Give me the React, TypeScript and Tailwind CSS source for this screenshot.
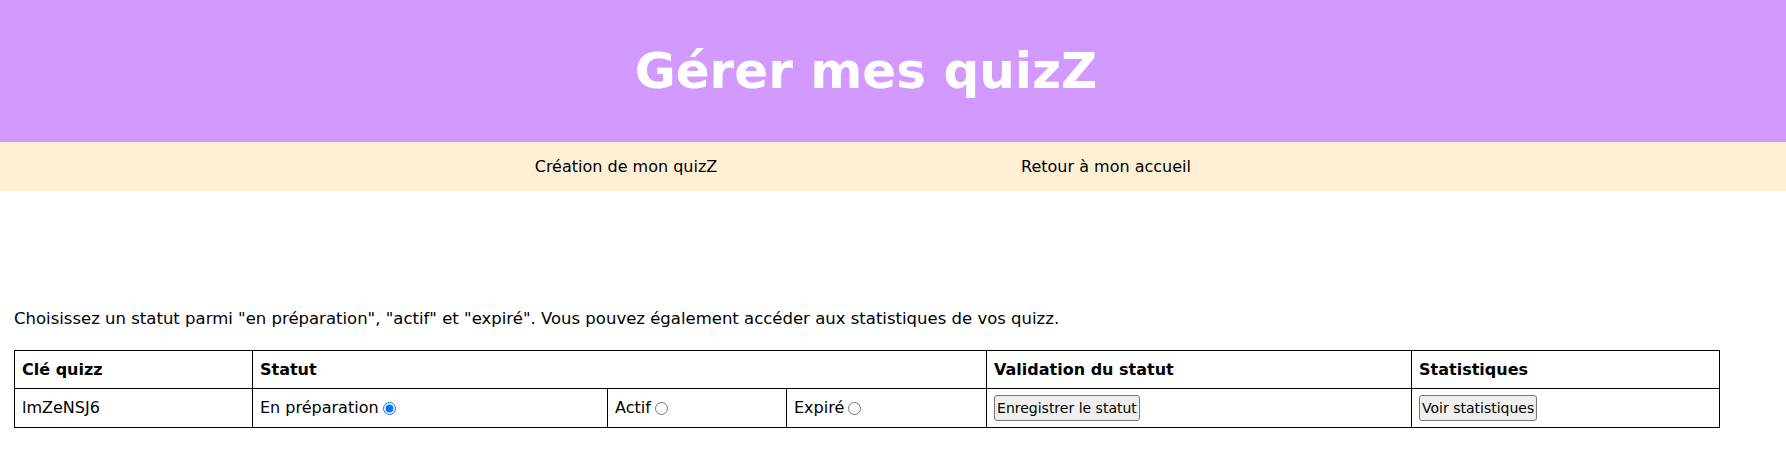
import { useState } from "react";

const font = "font-['Comic_Sans_MS','DejaVu_Sans',sans-serif]";

const App = () => {
  const [statut, setStatut] = useState("prep");

  return (
    <main className={`${font} bg-white text-black min-h-[465px]`}>
      {/* bandeau titre */}
      <div className="h-[142px] bg-[#d299ff] flex items-center justify-center pr-[54px]">
        <h1 className="text-white font-bold text-[50px] leading-none">Gérer mes quizZ</h1>
      </div>

      {/* menu */}
      <nav className="h-[49px] bg-[#ffefd5] flex items-center justify-center pr-[54px] text-[16px]">
        <a href="#" className="w-[480px] text-center">Création de mon quizZ</a>
        <a href="#" className="w-[480px] text-center">Retour à mon accueil</a>
      </nav>

      <div className="pt-[117px] pl-[14px]">
        <p className="text-[16.5px] leading-[22px]">
          Choisissez un statut parmi "en préparation", "actif" et "expiré". Vous pouvez également accéder aux statistiques de vos quizz.
        </p>

        <table className="mt-[20px] border-collapse w-[1705px] table-fixed text-[16px]">
          <colgroup>
            <col className="w-[238px]" />
            <col className="w-[355px]" />
            <col className="w-[179px]" />
            <col className="w-[200px]" />
            <col className="w-[425px]" />
            <col className="w-[308px]" />
          </colgroup>
          <thead>
            <tr className="h-[38px] font-bold text-left">
              <th className="border border-black px-[7px]">Clé quizz</th>
              <th className="border border-black px-[7px]" colSpan={3}>Statut</th>
              <th className="border border-black px-[7px]">Validation du statut</th>
              <th className="border border-black px-[7px]">Statistiques</th>
            </tr>
          </thead>
          <tbody>
            <tr className="h-[39px]">
              <td className="border border-black px-[7px]">lmZeNSJ6</td>
              <td className="border border-black px-[7px]">
                <label className="inline-flex items-center">
                  En préparation
                  <input
                    type="radio"
                    name="statut"
                    checked={statut === "prep"}
                    onChange={() => setStatut("prep")}
                    className="ml-[4px] w-[13px] h-[13px]"
                  />
                </label>
              </td>
              <td className="border border-black px-[7px]">
                <label className="inline-flex items-center">
                  Actif
                  <input
                    type="radio"
                    name="statut"
                    checked={statut === "actif"}
                    onChange={() => setStatut("actif")}
                    className="ml-[4px] w-[13px] h-[13px]"
                  />
                </label>
              </td>
              <td className="border border-black px-[7px]">
                <label className="inline-flex items-center">
                  Expiré
                  <input
                    type="radio"
                    name="statut"
                    checked={statut === "expire"}
                    onChange={() => setStatut("expire")}
                    className="ml-[4px] w-[13px] h-[13px]"
                  />
                </label>
              </td>
              <td className="border border-black px-[7px]">
                <button className="h-[26px] px-[2px] text-[14px] bg-[#efefef] border border-[#767676] rounded-[3px]">
                  Enregistrer le statut
                </button>
              </td>
              <td className="border border-black px-[7px]">
                <button className="h-[26px] px-[2px] text-[14px] bg-[#efefef] border border-[#767676] rounded-[3px]">
                  Voir statistiques
                </button>
              </td>
            </tr>
          </tbody>
        </table>
      </div>
    </main>
  );
};

export default App;
